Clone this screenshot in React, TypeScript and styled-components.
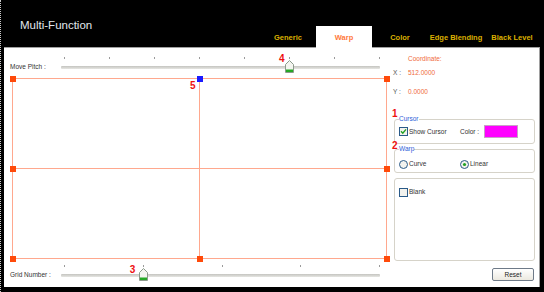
import React from 'react';
import styled, { createGlobalStyle } from 'styled-components';

const GlobalStyle = createGlobalStyle`
    body {
        margin: 0;
        font-family: 'Liberation Sans', Arial, sans-serif;
    }
`;

const tabs = ['Generic', 'Warp', 'Color', 'Edge Blending', 'Black Level'];

type TSlider = {
    label: string;
    ticks: number;
    value: number;
    badge: string;
    badgeX: number;
    badgeY: number;
};

const Thumb = () => (
    <svg width="9" height="13" viewBox="0 0 9 13">
        <path d="M4.5 0.5 L8.5 4.5 L8.5 12.5 L0.5 12.5 L0.5 4.5 Z" fill="#f4f5f0" stroke="#8c9a8c" />
        <rect x="1" y="9.5" width="7" height="2.5" fill="#25a825" />
    </svg>
);

const Slider = ({ label, ticks, value, badge, badgeX, badgeY }: TSlider) => {
    const pct = value / (ticks - 1);
    return (
        <SliderRow>
            <SliderLabel>{label}</SliderLabel>
            <SliderArea>
                <TickRow>
                    {Array.from({ length: ticks }).map((_, i) => (
                        <Tick key={i} />
                    ))}
                </TickRow>
                <Track />
                <ThumbWrap style={{ left: `calc(3px + ${pct} * (100% - 4px))` }}>
                    <Thumb />
                    <Badge $x={badgeX} $y={badgeY}>
                        {badge}
                    </Badge>
                </ThumbWrap>
            </SliderArea>
        </SliderRow>
    );
};

const points: Array<[number, number, boolean]> = [
    [3.5, 3.5, false],
    [190.5, 3.5, true],
    [377.5, 3.5, false],
    [3.5, 93.5, false],
    [377.5, 93.5, false],
    [3.5, 183.5, false],
    [190.5, 183.5, false],
    [377.5, 183.5, false],
];

const WarpGrid = () => (
    <svg width="381" height="187" viewBox="0 0 381 187">
        <g stroke="#ffa88e" strokeWidth="1" fill="none">
            <rect x="3.5" y="3.5" width="374" height="180" />
            <line x1="190.5" y1="3.5" x2="190.5" y2="183.5" />
            <line x1="3.5" y1="93.5" x2="377.5" y2="93.5" />
        </g>
        {points.map(([x, y, sel], i) => (
            <rect key={i} x={x - 2.5} y={y - 2.5} width="6" height="6" fill={sel ? '#1a1aff' : '#ff4a0a'} />
        ))}
    </svg>
);

const CheckBox = ({ checked }: { checked?: boolean }) => (
    <svg width="9" height="9" viewBox="0 0 9 9">
        <rect x="0.5" y="0.5" width="8" height="8" fill="#f2f2ee" stroke="#2a5a88" />
        {checked && <path d="M2 4.3 L3.8 6.2 L7 2.4" stroke="#21a121" strokeWidth="1.4" fill="none" />}
    </svg>
);

const Radio = ({ checked }: { checked?: boolean }) => (
    <svg width="9" height="9" viewBox="0 0 9 9">
        <circle cx="4.5" cy="4.5" r="4" fill="#f2f2ee" stroke="#2a5a88" />
        {checked && <circle cx="4.5" cy="4.5" r="1.6" fill="#21a121" />}
    </svg>
);

export default function App() {
    return (
        <>
            <GlobalStyle />
            <Window>
                <Header>
                    <Title>Multi-Function</Title>
                    <Tabs>
                        {tabs.map((t) => (
                            <Tab key={t} $active={t === 'Warp'}>
                                {t}
                            </Tab>
                        ))}
                    </Tabs>
                </Header>
                <Body>
                    <LeftColumn>
                        <Slider label="Move Pitch :" ticks={8} value={5} badge="4" badgeX={-6} badgeY={-6} />
                        <Canvas>
                            <WarpGrid />
                            <Badge $x={181} $y={6}>
                                5
                            </Badge>
                        </Canvas>
                        <GridSlider>
                            <Slider label="Grid Number :" ticks={5} value={1} badge="3" badgeX={-9} badgeY={-3} />
                        </GridSlider>
                    </LeftColumn>
                    <RightColumn>
                        <CoordTitle>Coordinate:</CoordTitle>
                        <CoordRow $gap={4}>
                            <CoordLabel>X :</CoordLabel>
                            <CoordValue>512.0000</CoordValue>
                        </CoordRow>
                        <CoordRow $gap={9}>
                            <CoordLabel>Y :</CoordLabel>
                            <CoordValue>0.0000</CoordValue>
                        </CoordRow>
                        <Group $top={17} $padTop={1} $padBottom={5}>
                            <Legend>Cursor</Legend>
                            <Badge $x={-3} $y={-15}>
                                1
                            </Badge>
                            <GroupRow $height={13}>
                                <Option $width={61}>
                                    <CheckBox checked />
                                    <span>Show Cursor</span>
                                </Option>
                                <OptionText>Color :</OptionText>
                                <Swatch />
                            </GroupRow>
                        </Group>
                        <Group $top={0} $padTop={4} $padBottom={2}>
                            <Legend>Warp</Legend>
                            <Badge $x={-3} $y={-13}>
                                2
                            </Badge>
                            <GroupRow $height={12}>
                                <Option $width={61}>
                                    <Radio />
                                    <span>Curve</span>
                                </Option>
                                <Option $width={60}>
                                    <Radio checked />
                                    <span>Linear</span>
                                </Option>
                            </GroupRow>
                        </Group>
                        <BlankBox>
                            <Option $width={60}>
                                <CheckBox />
                                <span>Blank</span>
                            </Option>
                        </BlankBox>
                        <ResetButton>Reset</ResetButton>
                    </RightColumn>
                </Body>
            </Window>
        </>
    );
}

const Window = styled.div`
    width: 544px;
    height: 292px;
    box-sizing: border-box;
    background: #000;
    border-left: 1px dotted #c8c8c8;
    display: flex;
    flex-direction: column;
`;

const Header = styled.div`
    height: 47px;
    display: flex;
    justify-content: space-between;
    flex-shrink: 0;
`;

const Title = styled.div`
    padding: 18px 0 0 19px;
    font-size: 11.5px;
    line-height: 14px;
    color: #e2e8ee;
`;

const Tabs = styled.div`
    align-self: flex-end;
    display: flex;
    height: 22px;
    margin-right: 4px;
    margin-bottom: -1px;
    position: relative;
    z-index: 1;
`;

const Tab = styled.div<{ $active?: boolean }>`
    width: 56px;
    height: 23px;
    display: flex;
    align-items: center;
    justify-content: center;
    white-space: nowrap;
    font-size: 7.5px;
    font-weight: bold;
    padding-bottom: 1px;
    box-sizing: border-box;
    color: ${(p) => (p.$active ? '#ff7a3c' : '#dcb000')};
    background: ${(p) => (p.$active ? '#fff' : 'transparent')};
`;

const Body = styled.div`
    margin-left: 3px;
    width: 536px;
    height: 240px;
    box-sizing: border-box;
    background: #fff;
    border-top: 1px solid #a0a0a0;
    border-right: 1px solid #a0a0a0;
    display: grid;
    grid-template-columns: 386px 1fr;
`;

const LeftColumn = styled.div`
    padding: 8px 0 0 6px;
    display: flex;
    flex-direction: column;
`;

const SliderRow = styled.div`
    display: flex;
    height: 18px;
`;

const SliderLabel = styled.div`
    width: 51px;
    padding-top: 6px;
    font-size: 6.5px;
    line-height: 10px;
    color: #333;
    white-space: nowrap;
`;

const SliderArea = styled.div`
    width: 319px;
    position: relative;
`;

const TickRow = styled.div`
    display: flex;
    justify-content: space-between;
    padding: 1px 0 0 3px;
    height: 3px;
`;

const Tick = styled.div`
    width: 1px;
    height: 2px;
    background: #9a9a9a;
`;

const Track = styled.div`
    margin-top: 6px;
    height: 3px;
    background: linear-gradient(#c4c4c0, #e6e6e2);
    border-radius: 1px;
`;

const ThumbWrap = styled.div`
    position: absolute;
    top: 4px;
    width: 9px;
    height: 13px;
    margin-left: -4px;
    line-height: 0;
`;

const Badge = styled.span<{ $x: number; $y: number }>`
    position: absolute;
    left: ${(p) => p.$x}px;
    top: ${(p) => p.$y}px;
    font-size: 10px;
    line-height: 10px;
    font-weight: bold;
    color: #ee1010;
`;

const Canvas = styled.div`
    position: relative;
    width: 381px;
    height: 187px;
    margin: 1px 0 0 -1px;
    line-height: 0;
`;

const GridSlider = styled.div`
    margin-top: 2px;
`;

const RightColumn = styled.div`
    padding: 6px 4px 0 3px;
    display: flex;
    flex-direction: column;
    font-size: 6.5px;
    line-height: 10px;
    color: #333;
`;

const CoordTitle = styled.div`
    margin-left: 15px;
    color: #f06a3c;
`;

const CoordRow = styled.div<{ $gap: number }>`
    display: flex;
    margin-top: ${(p) => p.$gap}px;
`;

const CoordLabel = styled.div`
    width: 15px;
    color: #555;
`;

const CoordValue = styled.div`
    color: #f06a3c;
`;

const Group = styled.fieldset<{ $top: number; $padTop: number; $padBottom: number }>`
    position: relative;
    margin: ${(p) => p.$top}px 0 0 1px;
    padding: ${(p) => p.$padTop}px 4px ${(p) => p.$padBottom}px 4px;
    border: 1px solid #d6d3c9;
    border-radius: 3px;
    min-width: 0;
`;

const Legend = styled.legend`
    padding: 0;
    font-size: 6.5px;
    line-height: 10px;
    color: #2e5ed8;
`;

const GroupRow = styled.div<{ $height: number }>`
    display: flex;
    align-items: center;
    height: ${(p) => p.$height}px;
`;

const Option = styled.div<{ $width: number }>`
    display: flex;
    align-items: center;
    gap: 1px;
    width: ${(p) => p.$width}px;
    white-space: nowrap;
    svg {
        flex-shrink: 0;
    }
`;

const OptionText = styled.span`
    margin-right: 5px;
`;

const Swatch = styled.div`
    width: 34px;
    height: 13px;
    box-sizing: border-box;
    background: #ff00ff;
    border: 1px solid #c8a0c8;
`;

const BlankBox = styled.div`
    margin: 5px 0 0 1px;
    height: 83px;
    box-sizing: border-box;
    padding: 8px 4px 0 4px;
    border: 1px solid #d6d3c9;
    border-radius: 3px;
`;

const ResetButton = styled.button`
    align-self: flex-end;
    margin: 7px 1px 0 0;
    width: 42px;
    height: 13px;
    padding: 0;
    font-family: 'Liberation Sans', Arial, sans-serif;
    font-size: 6.5px;
    color: #222;
    border: 1px solid #6e7a88;
    border-radius: 2px;
    background: linear-gradient(#ffffff, #ece9e0);
`;
